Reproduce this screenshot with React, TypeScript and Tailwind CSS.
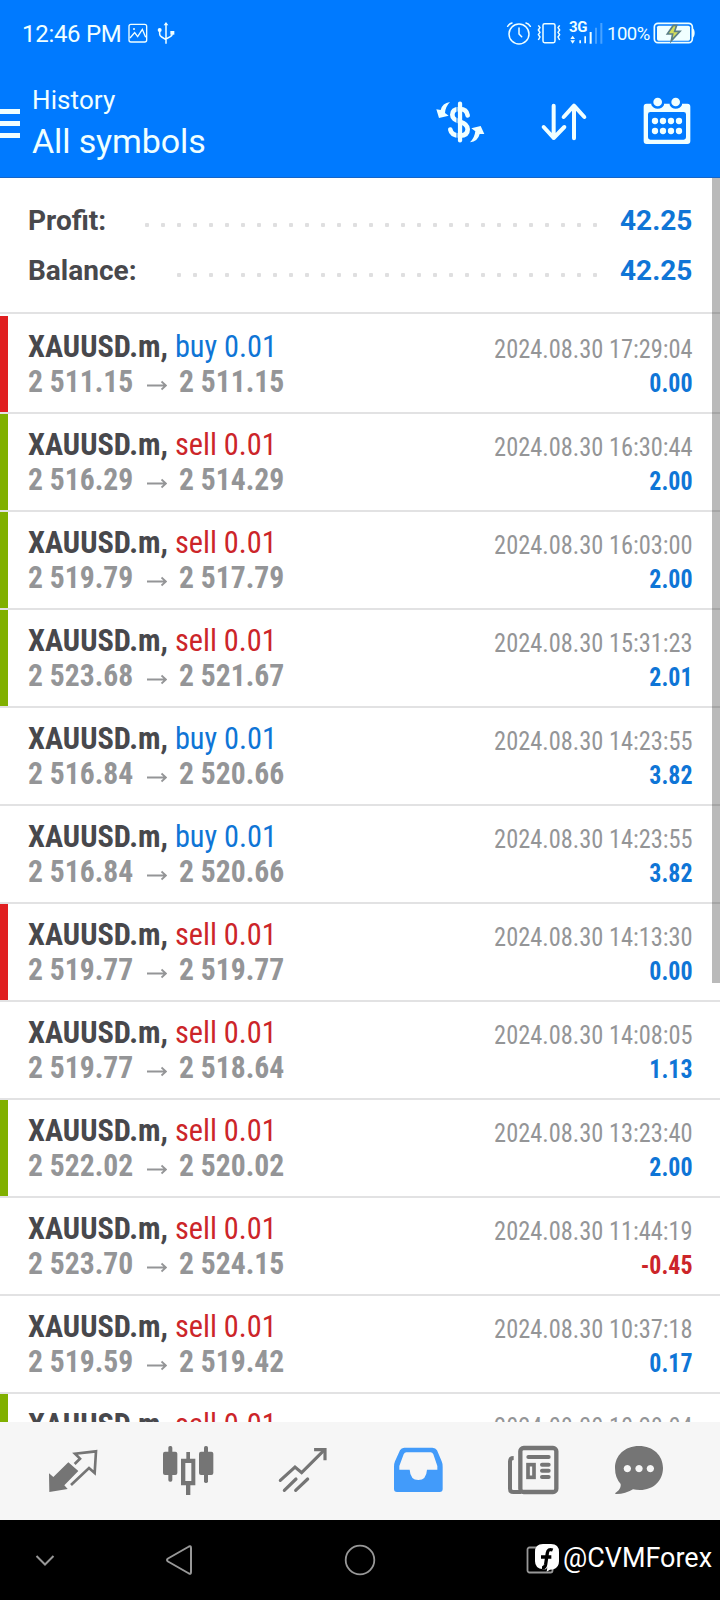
import React from "react";

type Deal = {
  side: "buy" | "sell";
  open: string;
  close: string;
  time: string;
  profit: string;
  mark?: "sl" | "tp";
};

const deals: Deal[] = [
  { side: "buy", open: "2 511.15", close: "2 511.15", time: "2024.08.30 17:29:04", profit: "0.00", mark: "sl" },
  { side: "sell", open: "2 516.29", close: "2 514.29", time: "2024.08.30 16:30:44", profit: "2.00", mark: "tp" },
  { side: "sell", open: "2 519.79", close: "2 517.79", time: "2024.08.30 16:03:00", profit: "2.00", mark: "tp" },
  { side: "sell", open: "2 523.68", close: "2 521.67", time: "2024.08.30 15:31:23", profit: "2.01", mark: "tp" },
  { side: "buy", open: "2 516.84", close: "2 520.66", time: "2024.08.30 14:23:55", profit: "3.82" },
  { side: "buy", open: "2 516.84", close: "2 520.66", time: "2024.08.30 14:23:55", profit: "3.82" },
  { side: "sell", open: "2 519.77", close: "2 519.77", time: "2024.08.30 14:13:30", profit: "0.00", mark: "sl" },
  { side: "sell", open: "2 519.77", close: "2 518.64", time: "2024.08.30 14:08:05", profit: "1.13" },
  { side: "sell", open: "2 522.02", close: "2 520.02", time: "2024.08.30 13:23:40", profit: "2.00", mark: "tp" },
  { side: "sell", open: "2 523.70", close: "2 524.15", time: "2024.08.30 11:44:19", profit: "-0.45" },
  { side: "sell", open: "2 519.59", close: "2 519.42", time: "2024.08.30 10:37:18", profit: "0.17" },
  { side: "sell", open: "2 521.40", close: "2 519.40", time: "2024.08.30 10:28:04", profit: "2.00", mark: "tp" },
];

function StatusBar() {
  return (
    <div className="flex h-[66px] items-center pl-[22px] pr-[25px]">
      <span className="mt-[2px] w-[106px] whitespace-nowrap text-[24px] leading-none tracking-[-0.3px]">12:46 PM</span>
      <svg className="h-5 w-5" viewBox="384 69 60 60" fill="none" stroke="currentColor" strokeWidth="4">
        <rect x="387" y="73" width="53" height="53" rx="6" />
        <path d="M390 114 L404 98 L413 110 L427 88 L437 112" />
        <circle cx="402" cy="87" r="3" fill="currentColor" stroke="none" />
      </svg>
      <svg className="ml-[8px] h-6 w-5" viewBox="468 63 60 72" fill="none" stroke="currentColor" strokeWidth="4.5">
        <path d="M498 70 V131 M479 92 V102 Q479 108 485 111 L498 119 M517 100 Q517 107 511 110 L498 117" />
        <path d="M491 76 L498 66 L505 76 Z" fill="currentColor" stroke="none" />
        <circle cx="479" cy="90" r="6" fill="currentColor" stroke="none" />
        <path d="M511 93 H523 V104 H511 Z" fill="currentColor" stroke="none" />
      </svg>
      <svg className="ml-auto h-6 w-[26px]" viewBox="438 63 78 72" fill="none" stroke="currentColor" strokeWidth="4.5" strokeLinecap="round">
        <circle cx="477" cy="102" r="30" />
        <path d="M477 84 V102 L485 110 M443 79 Q448 71 456 69 M498 69 Q506 71 511 79" />
      </svg>
      <svg className="ml-[4px] h-6 w-[26px]" viewBox="528 63 78 72" fill="none" stroke="currentColor" strokeWidth="4.5" strokeLinejoin="round">
        <rect x="549" y="71" width="36" height="57" rx="5" />
        <path d="M535 76 L540 83 L535 90 L540 97 L535 104 L540 111 L535 120 M599 76 L594 83 L599 90 L594 97 L599 104 L594 111 L599 120" />
      </svg>
      <div className="ml-[7px] flex h-6 w-[34px] flex-col">
        <span className="h-[11px] text-[15px] font-bold leading-[12px] tracking-[-0.4px]">3G</span>
        <svg className="-mt-[11px] h-6 w-[34px]" viewBox="627 63 102 72" fill="currentColor">
          <path d="M631 117 L638 107 L645 117 Z M631 121 L638 131 L645 121 Z M658 121 H663 V130 H658 Z M673 109 H678 V130 H673 Z M689 96 H695 V131 H689 Z" />
          <path opacity=".3" d="M705 83 H711 V131 H705 Z M721 69 H727 V131 H721 Z" />
        </svg>
      </div>
      <span className="ml-[4px] mt-[2px] w-[44px] whitespace-nowrap text-[18.5px] leading-none tracking-[-0.5px]">100%</span>
      <svg className="ml-[2px] h-6 w-[42px]" viewBox="880 63 126 72" fill="none">
        <rect x="884" y="70" width="114" height="58" rx="11" stroke="currentColor" strokeWidth="5" />
        <path d="M998 84 Q1005 87 1005 99 Q1005 111 998 114 Z" fill="currentColor" />
        <rect x="892" y="77" width="99" height="45" rx="5" fill="currentColor" />
        <path d="M941 76 L923 102 H939 L935 122 L961 94 H945 L951 76 Z" fill="#d3dd5c" stroke="#5b7f86" strokeWidth="5" />
      </svg>
    </div>
  );
}

function AppBar() {
  return (
    <div className="flex h-[112px] border-b border-[#1565c8] pr-[27px]">
      <div className="mt-[43px] flex w-5 flex-col gap-[7px]">
        <div className="h-[5px] bg-current" />
        <div className="h-[5px] bg-current" />
        <div className="h-[5px] bg-current" />
      </div>
      <div className="ml-3 pt-[16px]">
        <div className="h-[37px] text-[26px] leading-[36px] tracking-[0.1px]">History</div>
        <div className="h-[44px] text-[34px] leading-[44px] tracking-[-0.12px]">All symbols</div>
      </div>
      <svg className="ml-auto mt-[30px] h-[52px] w-[52px]" viewBox="222 288 156 156" fill="none" stroke="currentColor" strokeWidth="14">
        <path d="M300 311 V421" strokeWidth="13" strokeLinecap="round" />
        <path d="M323 346 C321 333 312 327 299 327 C284 327 277 334 277 344 C277 356 285 360 300 365 C316 370 323 376 323 388 C323 400 315 407 300 407 C283 407 273 401 271 389" strokeLinecap="round" />
        <path stroke="#007aff" strokeWidth="3" d="M291 306 V427" />
        <path d="M270 306 Q247 309 242 330 L229 328 L237 354 L266 347 L255 339 Q256 320 270 306 Z" fill="currentColor" stroke="none" />
        <path d="M330 427 Q354 424 359 402 L373 402 L362 378 L334 385 L346 394 Q344 413 330 427 Z" fill="currentColor" stroke="none" />
      </svg>
      <svg className="ml-[52px] mt-[30px] h-[52px] w-[52px]" viewBox="534 288 156 156" fill="none" stroke="currentColor" strokeWidth="12" strokeLinecap="round" strokeLinejoin="round">
        <path d="M581 317 V414 M551 381 L581 414 L613 381 M642 415 V317 M611 351 L642 317 L673 351" />
      </svg>
      <svg className="ml-[51px] mt-[30px] h-[52px] w-[52px]" viewBox="843 288 156 156" fill="currentColor">
        <path fillRule="evenodd" d="M860 311 H874 V315 Q880 326 893 326 Q907 326 912 315 V311 H929 V315 Q934 326 947 326 Q961 326 966 315 V311 H982 Q991 311 991 320 V423 Q991 432 982 432 H860 Q851 432 851 423 V320 Q851 311 860 311 Z M871 336 Q864 336 864 343 V412 Q864 419 871 419 H971 Q978 419 978 412 V343 Q978 336 971 336 Z" />
        <circle cx="893" cy="306" r="13" />
        <circle cx="947" cy="306" r="13" />
        {[885, 909, 933, 957].map((cx) => (
          <React.Fragment key={cx}>
            <circle cx={cx} cy="363" r="9.5" />
            <circle cx={cx} cy="393" r="9.5" />
          </React.Fragment>
        ))}
      </svg>
    </div>
  );
}

function SummaryRow({ label, value, dots }: { label: string; value: string; dots: number }) {
  return (
    <div className="flex h-[50px] items-center text-[28px] font-bold leading-none">
      <span className="text-[#48484c]">{label}</span>
      <div className="ml-auto mr-[23px] mt-[8px] flex gap-3">
        {Array.from({ length: dots }, (_, i) => (
          <div key={i} className="h-1 w-1 rounded-[1px] bg-[#dfdfe0]" />
        ))}
      </div>
      <span className="w-[71px] text-right text-[#0f75d6]">{value}</span>
    </div>
  );
}

function DealRow({ deal }: { deal: Deal }) {
  const bar = deal.mark === "sl" ? "bg-[#e01f20]" : deal.mark === "tp" ? "bg-[#80b000]" : "bg-transparent";
  return (
    <div className="flex h-[98px] border-b-2 border-[#e2e2e3] [font-family:'Roboto_Condensed',Roboto,sans-serif] [font-stretch:75%]">
      <div className={"w-2 " + bar} />
      <div className="ml-5 whitespace-nowrap pt-[13px]">
        <div className="h-[35px] origin-left scale-x-[0.963] text-[31.5px] leading-[35px]">
          <span className="font-bold text-[#48484c]">XAUUSD.m,</span>{" "}
          <span className={deal.side === "buy" ? "text-[#0f75d6]" : "text-[#cc2529]"}>{deal.side} 0.01</span>
        </div>
        <div className="flex h-[35px] text-[31.5px] font-bold leading-[35px] text-[#949597]">
          <span className="w-[119px] origin-left scale-x-[0.94]">{deal.open}</span>
          <svg className="mt-[15px] h-3 w-5" viewBox="0 0 20 12" fill="none" stroke="currentColor" strokeWidth="1.8">
            <path d="M0 6.500 H19 M14.500 2.500 L19 6.500 L14.500 10.500" />
          </svg>
          <span className="ml-[12px] origin-left scale-x-[0.94]">{deal.close}</span>
        </div>
      </div>
      <div className="ml-auto mr-[27.5px] whitespace-nowrap pt-[16px] text-right text-[26px]">
        <div className="h-[34px] origin-right scale-x-[0.938] leading-[34px] text-[#949597]">{deal.time}</div>
        <div className={"h-[34px] origin-right scale-x-[0.92] font-bold leading-[34px] " + (deal.profit.startsWith("-") ? "text-[#cc2529]" : "text-[#0f75d6]")}>
          {deal.profit}
        </div>
      </div>
    </div>
  );
}

function TabBar() {
  return (
    <div className="flex h-[98px] items-center bg-[#f6f6f6] pb-[2px] pl-[47px] text-[#757575]">
      <svg className="h-[52px] w-[52px]" viewBox="142 162 156 156">
        <path fill="currentColor" d="M206 217 L236 243 L194 286 L204 297 L149 306 L148 250 L161 261 Z" />
        <path fill="none" stroke="currentColor" strokeWidth="8" d="M225 222 L241 206 L226 191 L289 184 L285 249 L268 234 L214 285" />
      </svg>
      <svg className="ml-[63px] h-[52px] w-[52px]" viewBox="487 162 156 156" fill="currentColor">
        <rect x="490" y="185" width="43" height="70" rx="6" />
        <rect x="506" y="168" width="12" height="107" rx="5" />
        <rect x="598" y="185" width="43" height="70" rx="6" />
        <rect x="613" y="168" width="12" height="111" rx="5" />
        <path d="M560 186 H571 V206 H587 V286 H572 V315 H559 V286 H544 V206 H560 Z M557 219 V273 H575 V219 Z" fillRule="evenodd" />
      </svg>
      <svg className="ml-[63px] h-[52px] w-[52px]" viewBox="832 162 156 156" fill="none" stroke="currentColor" strokeWidth="9.5" strokeLinecap="round">
        <path d="M842 271 L886 231 L906 248 L972 182 M854 301 L889 267 M888 301 L924 267" />
        <path d="M948 179 H976 V206" strokeLinecap="square" />
      </svg>
      <svg className="ml-[63px] h-[52px] w-[52px] text-[#429bfa]" viewBox="96 162 156 156" fill="currentColor">
        <path fillRule="evenodd" d="M133 173 H217 Q227 173 231 181 L245 214 Q248 221 248 230 V297 Q248 306 239 306 H111 Q102 306 102 297 V230 Q102 221 105 214 L120 181 Q124 173 133 173 Z M139 187 Q134 187 131 193 L118 228 V239 H149 Q151 270 175 270 Q199 270 201 239 H232 V228 L220 193 Q217 187 212 187 Z" />
      </svg>
      <svg className="ml-[63px] h-[52px] w-[52px]" viewBox="442 162 156 156" fill="none" stroke="currentColor" strokeWidth="11" strokeLinecap="round">
        <path d="M485 306 H461 Q451 306 451 296 V214 Q451 204 462 204" strokeWidth="12" strokeLinecap="butt" />
        <rect x="482" y="174" width="108" height="132" rx="10" strokeWidth="13" />
        <path d="M506 201 H567 M547 224 H567 M547 242 H567 M547 261 H567" strokeWidth="12" />
        <rect x="505" y="224" width="18" height="38" />
      </svg>
      <svg className="ml-[54px] h-[52px] w-[52px]" viewBox="759 162 156 156" fill="currentColor">
        <path fillRule="evenodd" d="M837 168 C880 168 909 197 909 234 C909 272 880 300 840 300 Q828 300 819 298 Q795 313 766 312 Q764 309 770 306 Q784 296 782 282 Q765 263 765 234 C765 197 794 168 837 168 Z M802 225 a11 11 0 1 0 .1 0 Z M837 225 a11 11 0 1 0 .1 0 Z M871 225 a11 11 0 1 0 .1 0 Z" />
      </svg>
    </div>
  );
}

function NavBar() {
  return (
    <div className="relative flex h-20 items-center bg-black text-[#989898]">
      <svg className="ml-[35px] h-5 w-5" viewBox="0 0 20 20" fill="none" stroke="currentColor" strokeWidth="2">
        <path d="M1.5 6 L10 14.5 L18.500 6" />
      </svg>
      <svg className="ml-[109px] h-8 w-8" viewBox="0 0 32 32" fill="none" stroke="currentColor" strokeWidth="2" strokeLinejoin="round">
        <path d="M25 2.500 Q27 1.500 27 4 V28 Q27 30.500 25 29.500 L4 17.500 Q2 16 4 14.500 Z" />
      </svg>
      <svg className="ml-[148px] h-8 w-8" viewBox="0 0 32 32" fill="none" stroke="currentColor" strokeWidth="1.8">
        <circle cx="16" cy="16" r="14.300" />
      </svg>
      <svg className="ml-[148px] h-8 w-8" viewBox="0 0 32 32" fill="none" stroke="currentColor" strokeWidth="1.8">
        <rect x="3.500" y="3.500" width="25" height="25" rx="2" />
      </svg>
      <div className="absolute right-2 top-[22px] flex items-start text-white">
        <svg className="h-[30px] w-6" viewBox="525 456 72 90">
          <path fill="#fff" d="M549 462 H573 Q597 462 597 486 V514 Q597 532 581 538 Q569 538 560 545 L562 532 L558 538 H549 Q525 536 525 514 V486 Q525 462 549 462 Z" />
          <path fill="none" stroke="#000" strokeWidth="10" d="M578 480 Q564 475 562 489 L557 523 Q555 534 546 533 M543 501 H574" />
        </svg>
        <span className="-mt-[1px] ml-[4px] h-[34px] w-[149px] origin-left scale-x-[0.963] whitespace-nowrap text-[28px] leading-[34px]">@CVMForex</span>
      </div>
    </div>
  );
}

export default function App() {
  return (
    <div className="flex h-[1600px] w-[720px] flex-col overflow-hidden bg-white [font-family:Roboto,sans-serif]">
      <header className="bg-[#007aff] text-[#f0ffff]">
        <StatusBar />
        <AppBar />
      </header>
      <main className="relative h-[1244px] overflow-hidden">
        <section className="h-[136px] border-b-2 border-[#e2e2e3] pl-7 pr-[29px] pt-[18px]">
          <SummaryRow label="Profit:" value="42.25" dots={29} />
          <SummaryRow label="Balance:" value="42.25" dots={27} />
        </section>
        <section className="pt-[2px]">
          {deals.map((deal, i) => (
            <DealRow key={i} deal={deal} />
          ))}
        </section>
        <div className="absolute right-0 top-0 h-[805px] w-2 bg-black/27" />
      </main>
      <TabBar />
      <NavBar />
    </div>
  );
}
